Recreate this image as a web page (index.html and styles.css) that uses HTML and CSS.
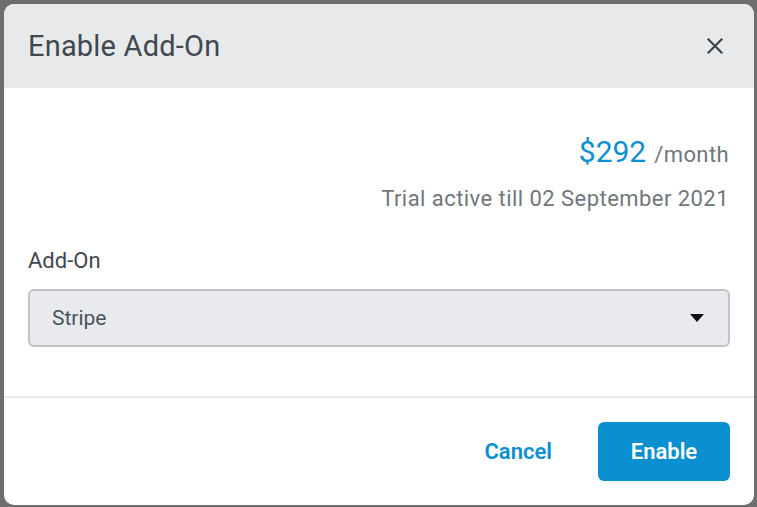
FILE: index.html
```html
<!DOCTYPE html>
<html>
<head>
<meta charset="utf-8">
<link rel="stylesheet" href="styles.css">
</head>
<body>
<div class="backdrop">
  <div class="modal">
    <div class="modal-header">
      <h1 class="modal-title">Enable Add-On</h1>
      <button class="close-btn" aria-label="Close">
        <svg width="16" height="16" viewBox="0 0 16 16"><path d="M1.5 1.5 L14.5 14.5 M14.5 1.5 L1.5 14.5" stroke="#3b444c" stroke-width="2.2" stroke-linecap="square"/></svg>
      </button>
    </div>
    <div class="modal-body">
      <div class="price-row"><span class="price">$292</span><span class="per">/month</span></div>
      <div class="trial">Trial active till 02 September 2021</div>
      <label class="field-label">Add-On</label>
      <div class="select">
        <span class="select-value">Stripe</span>
        <svg class="caret" width="14" height="8" viewBox="0 0 14 8"><path d="M0 0 H14 L7 8 Z" fill="#111"/></svg>
      </div>
    </div>
    <div class="modal-footer">
      <button class="btn-link">Cancel</button>
      <button class="btn-primary">Enable</button>
    </div>
  </div>
</div>
</body>
</html>
```
FILE: styles.css
```css
* { box-sizing: border-box; }
html, body { margin: 0; padding: 0; }
body {
  background: #6e6e6e;
  font-family: Roboto, "Noto Sans", sans-serif;
  width: 757px;
  height: 507px;
  overflow: hidden;
}
.backdrop {
  padding: 4px 3px 2px 4px;
}
.modal {
  width: 750px;
  height: 501px;
  background: #fff;
  border-radius: 10px;
  overflow: hidden;
  display: flex;
  flex-direction: column;
}
.modal-header {
  height: 84px;
  flex: none;
  background: #e8e9eb;
  display: flex;
  align-items: center;
  justify-content: space-between;
  padding: 0 31px 0 24px;
}
.modal-title {
  margin: 0;
  font-size: 29px;
  line-height: 36px;
  font-weight: 400;
  letter-spacing: 0.2px;
  color: #3f474f;
}
.close-btn {
  border: 0;
  background: none;
  padding: 0;
  display: flex;
}
.modal-body {
  flex: none;
  padding: 46px 25px 0 24px;
  height: 310px;
  border-bottom: 2px solid #e8e8e8;
}
.price-row {
  display: flex;
  justify-content: flex-end;
  align-items: baseline;
  gap: 8px;
  height: 36px;
  line-height: 36px;
}
.price {
  color: #0a8fd0;
  font-size: 30px;
}
.per {
  color: #70767c;
  font-size: 22px;
  letter-spacing: 0.4px;
}
.trial {
  text-align: right;
  color: #70767c;
  font-size: 22px;
  line-height: 28px;
  letter-spacing: 0.45px;
  margin-top: 15px;
}
.field-label {
  display: block;
  color: #3e474f;
  font-size: 22px;
  line-height: 28px;
  margin-top: 34px;
}
.select {
  margin-top: 14px;
  margin-right: -1px;
  height: 58px;
  background: #e8eaed;
  border: 2px solid #c0c4c8;
  border-radius: 6px;
  display: flex;
  align-items: center;
  justify-content: space-between;
  padding: 0 24px 0 22px;
}
.select-value {
  color: #4a535b;
  font-size: 21px;
}
.modal-footer {
  flex: 1;
  display: flex;
  justify-content: flex-end;
  align-items: center;
  gap: 46px;
  padding: 0 24px 0 0;
}
.btn-link {
  border: 0;
  background: none;
  color: #0a8fd0;
  font-family: inherit;
  font-size: 22px;
  font-weight: 600;
  padding: 0;
}
.btn-primary {
  border: 0;
  background: #0a8fd0;
  color: #fff;
  font-family: inherit;
  font-size: 22px;
  font-weight: 600;
  width: 132px;
  height: 59px;
  border-radius: 6px;
}
```
